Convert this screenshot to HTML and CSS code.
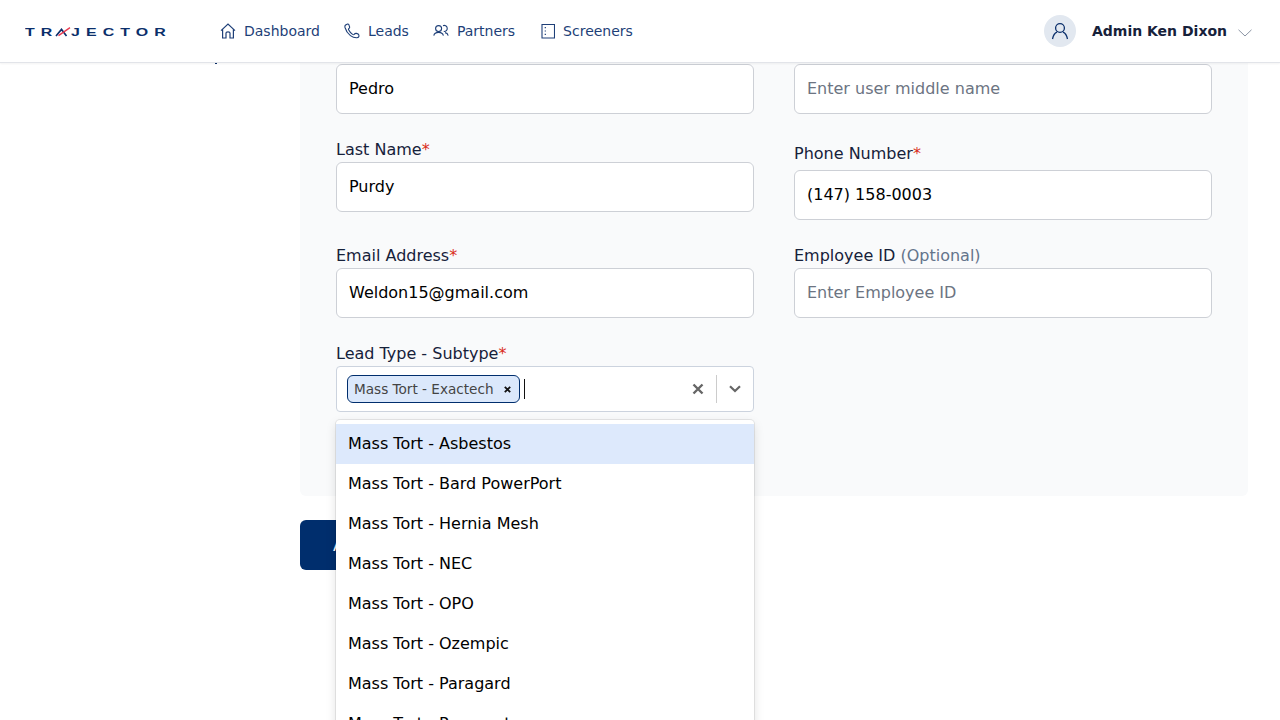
FILE: index.html
```html
<!DOCTYPE html>
<html>

<head>
    <title>Edit Lead</title>
    <meta charset='utf-8'>
    <link rel="stylesheet" href="styles.css">
</head>

<body>
    <header class='topbar'>
        <div class='logo'>
            <span class='logo-text logo-start'>TR</span>
            <svg width='16' height='10' viewBox='0 0 16 10'>
                <path d='M1 9 L6.5 2.4 L11.5 9' fill='none' stroke='#0b2f6b' stroke-width='1.6'/>
                <path d='M3.5 8.6 L15 0.6' fill='none' stroke='#e8384f' stroke-width='1.3'/>
            </svg>
            <span class='logo-text'>JECTOR</span>
        </div>
        <nav class='nav'>
            <a class='nav-item'>
                <svg width='16' height='16' viewBox='0 0 16 16' fill='none' stroke='#1e3f78' stroke-width='1.2'>
                    <path d='M1 7.6 L8 1 L15 7.6 M2.6 6.4 V15 H6 V10 Q6 8.8 8 8.8 Q10 8.8 10 10 V15 H13.4 V6.4'/>
                </svg>
                Dashboard
            </a>
            <a class='nav-item'>
                <svg width='16' height='16' viewBox='0 0 16 16' fill='none' stroke='#1e3f78' stroke-width='1.1'>
                    <path d='M3.6 1 L1.6 2 Q0.6 2.8 1 4.5 Q2.4 9.5 6.4 12.6 Q9.6 15 13 14.8 Q14.8 14.6 15 13.2 L14.8 11.8 Q14.6 11 12.4 10.4 Q11 10.2 10.2 11.4 Q9.6 12 8.6 11.4 Q6 9.6 4.6 6.8 Q4.2 6 5 5.4 Q5.8 4.8 5.6 3.8 L4.8 1.6 Q4.4 0.8 3.6 1 Z'/>
                </svg>
                Leads
            </a>
            <a class='nav-item'>
                <svg width='16' height='16' viewBox='0 0 16 16' fill='none' stroke='#1e3f78' stroke-width='1.1'>
                    <circle cx='5.6' cy='5.6' r='3'/>
                    <path d='M10 2.7 A3 3 0 1 1 10.8 8.4 M0.8 12.6 Q1.4 9.4 5.6 9.4 Q9.6 9.4 10.4 12.6 M12 9.6 Q14.6 10 15.2 12.6'/>
                </svg>
                Partners
            </a>
            <a class='nav-item'>
                <svg width='16' height='16' viewBox='0 0 16 16' fill='none' stroke='#1e3f78' stroke-width='1.1'>
                    <path d='M3 1.5 H15.5 V15 H3 Z'/>
                    <path d='M6.3 4 V5.2 M6.3 7.4 V8.6 M6.3 10.8 V12' stroke-width='1.2'/>
                </svg>
                Screeners
            </a>
        </nav>
        <div class='user'>
            <span class='avatar'>
                <svg width='18' height='18' viewBox='0 0 18 18' fill='none' stroke='#0b2f6b' stroke-width='1.3'>
                    <circle cx='9' cy='6' r='4.4'/>
                    <path d='M1.5 17 Q2.6 11.6 6 10.2 M16.5 17 Q15.4 11.6 12 10.2'/>
                </svg>
            </span>
            <span class='user-name'>Admin Ken Dixon</span>
            <svg class='user-arrow' width='14' height='8' viewBox='0 0 14 8' fill='none' stroke='#8a93a3' stroke-width='1'>
                <path d='M0.5 0.8 L7 7 L13.5 0.8'/>
            </svg>
        </div>
    </header>

    <div class='page'>
        <aside class='sidebar'><span class='sidebar-clip'></span></aside>
        <main class='content'>
            <section class='panel'>
                <div class='col'>
                    <input class='input' type='text' value='Pedro'>
                    <label class='label label-lastname'>Last Name<span class='req'>*</span></label>
                    <input class='input' type='text' value='Purdy'>
                    <label class='label label-email'>Email Address<span class='req'>*</span></label>
                    <input class='input' type='text' value='Weldon15@gmail.com'>
                    <label class='label label-type'>Lead Type - Subtype<span class='req'>*</span></label>
                    <div class='select'>
                        <span class='chip'>Mass Tort - Exactech
                            <svg width='7' height='7' viewBox='0 0 7 7' stroke='#111' stroke-width='1.8'>
                                <path d='M0.8 0.8 L6.2 6.2 M6.2 0.8 L0.8 6.2'/>
                            </svg>
                        </span>
                        <span class='caret'></span>
                        <svg class='clear' width='12' height='12' viewBox='0 0 12 12' stroke='#666' stroke-width='2.4'>
                            <path d='M1.5 1.5 L10.5 10.5 M10.5 1.5 L1.5 10.5'/>
                        </svg>
                        <span class='select-sep'></span>
                        <svg class='select-arrow' width='12' height='8' viewBox='0 0 12 8' fill='none' stroke='#666' stroke-width='2.2'>
                            <path d='M1 1.2 L6 6 L11 1.2'/>
                        </svg>
                    </div>
                    <ul class='menu'>
                        <li class='option option-active'>Mass Tort - Asbestos</li>
                        <li class='option'>Mass Tort - Bard PowerPort</li>
                        <li class='option'>Mass Tort - Hernia Mesh</li>
                        <li class='option'>Mass Tort - NEC</li>
                        <li class='option'>Mass Tort - OPO</li>
                        <li class='option'>Mass Tort - Ozempic</li>
                        <li class='option'>Mass Tort - Paragard</li>
                        <li class='option'>Mass Tort - Paraquat</li>
                    </ul>
                </div>
                <div class='col'>
                    <input class='input' type='text' placeholder='Enter user middle name'>
                    <label class='label label-phone'>Phone Number<span class='req'>*</span></label>
                    <input class='input' type='text' value='(147) 158-0003'>
                    <label class='label label-employee'>Employee ID <span class='optional'>(Optional)</span></label>
                    <input class='input' type='text' placeholder='Enter Employee ID'>
                </div>
            </section>
            <button class='btn-primary'>Add</button>
        </main>
    </div>
</body>

</html>
```
FILE: styles.css
```css
html,
body {
    height: 100%;
    margin: 0;
    overflow: hidden
}

body {
    font-family: "DejaVu Sans", sans-serif;
    color: #16213a;
    background: #fff
}

.topbar {
    height: 62px;
    display: flex;
    align-items: center;
    padding: 0 28px 0 25px;
    background: #fff;
    border-bottom: 1px solid #e2e4e9;
    box-shadow: 0 1px 2px rgba(0, 0, 0, 0.05);
    position: relative;
    z-index: 5
}

.logo {
    width: 195px;
    margin-top: 1px;
    display: flex;
    align-items: center;
    font-family: "Liberation Sans", sans-serif
}

.logo-text {
    display: inline-block;
    width: 94px;
    font-size: 11px;
    font-weight: bold;
    color: #0b2f6b;
    line-height: 10px;
    letter-spacing: 4.2px;
    white-space: nowrap;
    transform: scaleX(1.45);
    transform-origin: left center
}

.logo-start {
    width: 30px
}

.nav {
    display: flex;
    gap: 24px
}

.nav-item {
    display: flex;
    align-items: center;
    gap: 8px;
    font-size: 14px;
    color: #1e3f78
}

.user {
    margin-left: auto;
    display: flex;
    align-items: center
}

.avatar {
    width: 32px;
    height: 32px;
    border-radius: 50%;
    background: #e2e8f0;
    display: flex;
    align-items: center;
    justify-content: center;
    margin-right: 16px
}

.user-name {
    font-size: 14px;
    font-weight: bold;
    color: #16213a;
    margin-right: 11px
}

.user-arrow {
    margin-top: 4px
}

.page {
    display: flex
}

.sidebar {
    width: 300px;
    flex-shrink: 0;
    position: relative
}

.sidebar-clip {
    position: absolute;
    left: 215px;
    top: 0;
    width: 2px;
    height: 1px;
    background: #0b2f6b
}

.content {
    width: 948px
}

.panel {
    display: flex;
    gap: 40px;
    height: 433px;
    box-sizing: border-box;
    padding: 1px 36px 0;
    background: #f9fafb;
    border-radius: 0 0 6px 6px
}

.col {
    width: 418px;
    display: flex;
    flex-direction: column;
    position: relative
}

.input {
    height: 50px;
    box-sizing: border-box;
    padding: 0 12px 2px;
    border: 1px solid #cdd0d6;
    border-radius: 6px;
    background: #fff;
    font: 16px "DejaVu Sans", sans-serif;
    color: #000
}

.input::placeholder {
    color: #6c7482;
    opacity: 1
}

.label {
    font-size: 16px;
    line-height: 20px;
    color: #16213a
}

.label-lastname {
    margin: 26px 0 2px
}

.label-email {
    margin: 34px 0 2px
}

.label-type {
    margin: 26px 0 2px
}

.label-phone {
    margin: 30px 0 6px
}

.label-employee {
    margin: 26px 0 2px
}

.req {
    color: #d92d20
}

.optional {
    color: #64748b
}

.select {
    height: 46px;
    box-sizing: border-box;
    display: flex;
    align-items: center;
    padding-left: 10px;
    border: 1px solid #ccd3de;
    border-radius: 4px;
    background: #fff
}

.chip {
    height: 28px;
    box-sizing: border-box;
    display: flex;
    align-items: center;
    gap: 10px;
    padding: 0 8px 0 6px;
    border: 1px solid #002e6d;
    border-radius: 6px;
    background: #dbe8fb;
    font-size: 13.6px;
    color: #444
}

.caret {
    width: 1px;
    height: 20px;
    margin-left: 4px;
    background: #111
}

.clear {
    margin-left: auto
}

.select-sep {
    width: 1px;
    height: 28px;
    margin: 0 12px 0 12px;
    background: #ccc
}

.select-arrow {
    margin-right: 12px
}

.menu {
    position: absolute;
    left: 0;
    top: 356px;
    width: 418px;
    height: 320px;
    box-sizing: border-box;
    margin: 0;
    padding: 4px 0;
    list-style: none;
    overflow: hidden;
    background: #fff;
    border-radius: 4px;
    box-shadow: 0 0 0 1px rgba(0, 0, 0, 0.08), 0 4px 11px rgba(0, 0, 0, 0.12);
    z-index: 3
}

.option {
    height: 40px;
    line-height: 40px;
    padding-left: 12px;
    font-size: 16px;
    color: #000
}

.option-active {
    background: #dde9fc
}

.btn-primary {
    display: block;
    margin-top: 24px;
    height: 50px;
    padding: 0 33px;
    border: 0;
    border-radius: 6px;
    background: #002e6d;
    color: #fff;
    font: 16px "DejaVu Sans", sans-serif
}
```
